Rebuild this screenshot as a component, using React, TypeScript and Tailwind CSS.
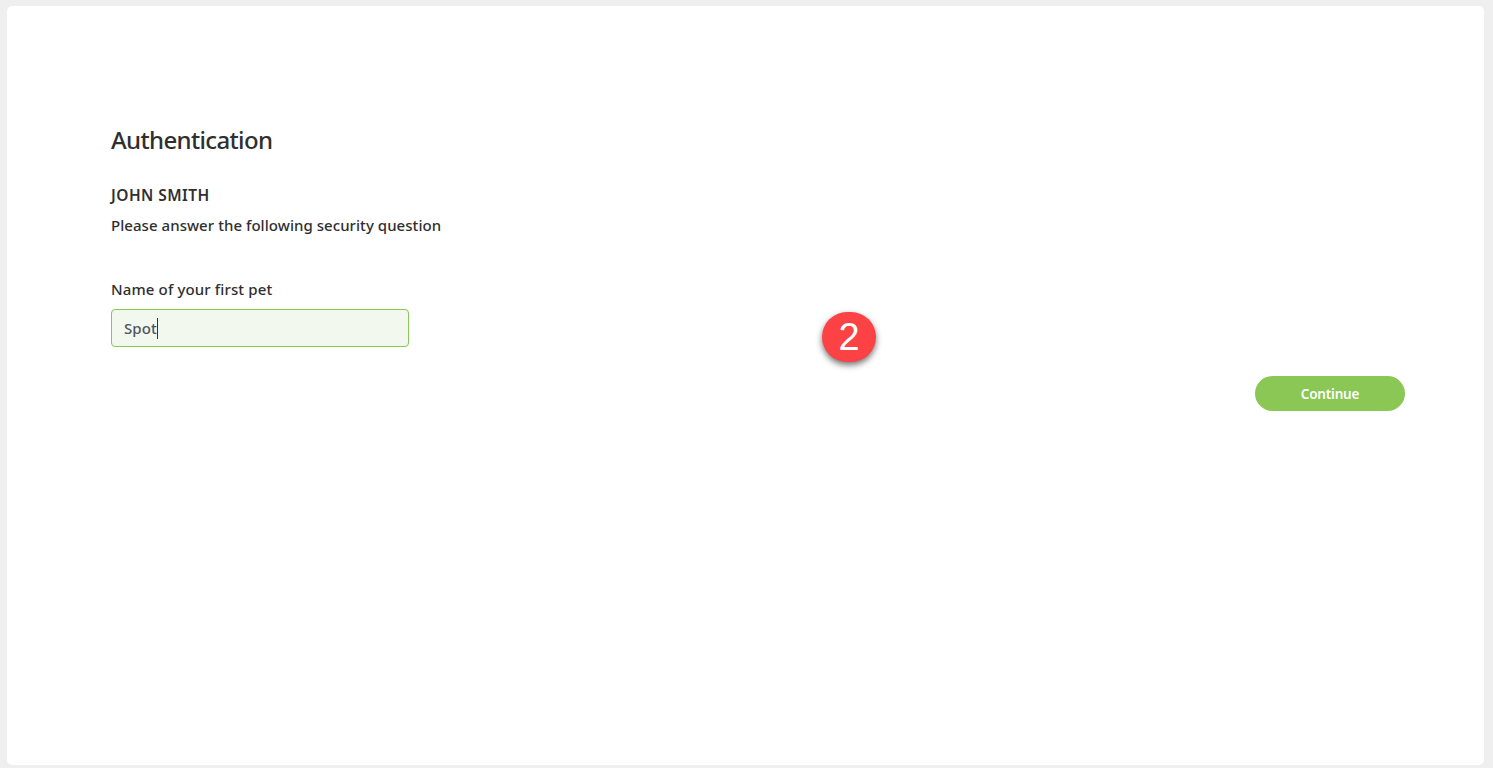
export default function App() {
  return (
    <div className="h-[768px] w-full overflow-hidden bg-[#efefef] pt-[6px] pr-[9px] pb-[3px] pl-[7px] font-['Noto_Sans',sans-serif] text-[#2f2f2f]">
      <div className="relative h-full rounded-[5px] bg-white pt-[117px] pr-[79px] pl-[104px]">
        <h1 className="text-[24px] leading-[33px] font-medium tracking-[-0.65px]">Authentication</h1>
        <div className="mt-[29px] text-[15.5px] leading-5 font-semibold tracking-[0.45px]">JOHN SMITH</div>
        <p className="mt-[10px] text-[15px] leading-5 font-medium tracking-[0.05px]">Please answer the following security question</p>
        <label className="mt-[44px] block text-[15px] leading-5 font-medium tracking-[0.13px]">Name of your first pet</label>
        <div className="mt-[10px] flex h-[38px] w-[298px] items-center rounded-[4px] border border-[#8bc756] bg-[#f3f8ef] pl-3 text-[15px] font-medium tracking-[0.1px] text-[#4d5560]">
          Spot<span className="h-[21px] w-px bg-[#333]" />
        </div>
        <div className="mt-[29px] flex justify-end">
          <button className="h-[35px] w-[150px] rounded-full bg-[#8ac755] pt-[1px] text-[13.5px] font-semibold tracking-[-0.2px] text-white">Continue</button>
        </div>
        <div className="absolute top-[306px] left-[815px] flex h-[50px] w-[54px] items-center justify-center rounded-full bg-[#fd4245] font-['Liberation_Sans',sans-serif] text-[38px] text-white shadow-[0_3px_6px_rgba(0,0,0,0.55)]">2</div>
      </div>
    </div>
  );
}
